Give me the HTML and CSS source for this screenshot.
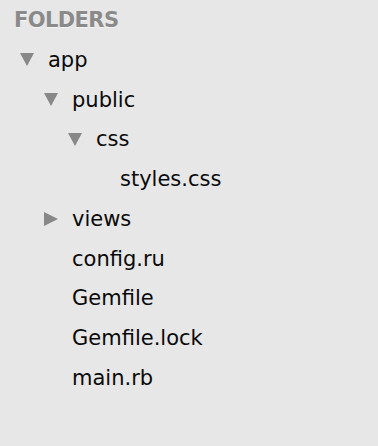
FILE: index.html
```html
<!DOCTYPE html>
<html lang="en">
<head>
    <meta charset="UTF-8">
    <title>Folders</title>
    <link rel="stylesheet" href="styles.css">
</head>
<body>
    <div class="sidebar">
        <h3 class="heading">FOLDERS</h3>
        <ul class="tree">
            <li class="row open"><span class="arrow"></span>app</li>
            <li>
                <ul class="tree">
                    <li class="row open"><span class="arrow"></span>public</li>
                    <li>
                        <ul class="tree">
                            <li class="row open"><span class="arrow"></span>css</li>
                            <li>
                                <ul class="tree">
                                    <li class="row"><span class="arrow none"></span>styles.css</li>
                                </ul>
                            </li>
                        </ul>
                    </li>
                    <li class="row closed"><span class="arrow"></span>views</li>
                    <li class="row"><span class="arrow none"></span>config.ru</li>
                    <li class="row"><span class="arrow none"></span>Gemfile</li>
                    <li class="row"><span class="arrow none"></span>Gemfile.lock</li>
                    <li class="row"><span class="arrow none"></span>main.rb</li>
                </ul>
            </li>
        </ul>
    </div>
</body>
</html>
```

FILE: styles.css
```css
body {
    margin: 0;
    background: #e7e7e7;
    font-family: "DejaVu Sans", sans-serif;
    color: #0a0a0a;
}

.sidebar {
    padding: 5px 0 0 14px;
}

.heading {
    margin: 0 0 5px 0;
    font-size: 21px;
    font-weight: bold;
    color: #8a8a8a;
    letter-spacing: -0.6px;
    line-height: 30px;
    text-shadow: 0 1px 0 #f4f4f4;
}

.tree {
    list-style: none;
    margin: 0;
    padding: 0;
}

.tree .tree {
    padding-left: 24px;
}

.row {
    display: flex;
    align-items: center;
    height: 39.75px;
    font-size: 21px;
}

.arrow {
    width: 34px;
    flex: none;
    display: flex;
    padding-left: 6px;
    box-sizing: border-box;
}

.open .arrow::before {
    content: "";
    border-left: 7.5px solid transparent;
    border-right: 7.5px solid transparent;
    border-top: 13px solid #888;
}

.closed .arrow::before {
    content: "";
    border-top: 7.5px solid transparent;
    border-bottom: 7.5px solid transparent;
    border-left: 14px solid #888;
}
```
